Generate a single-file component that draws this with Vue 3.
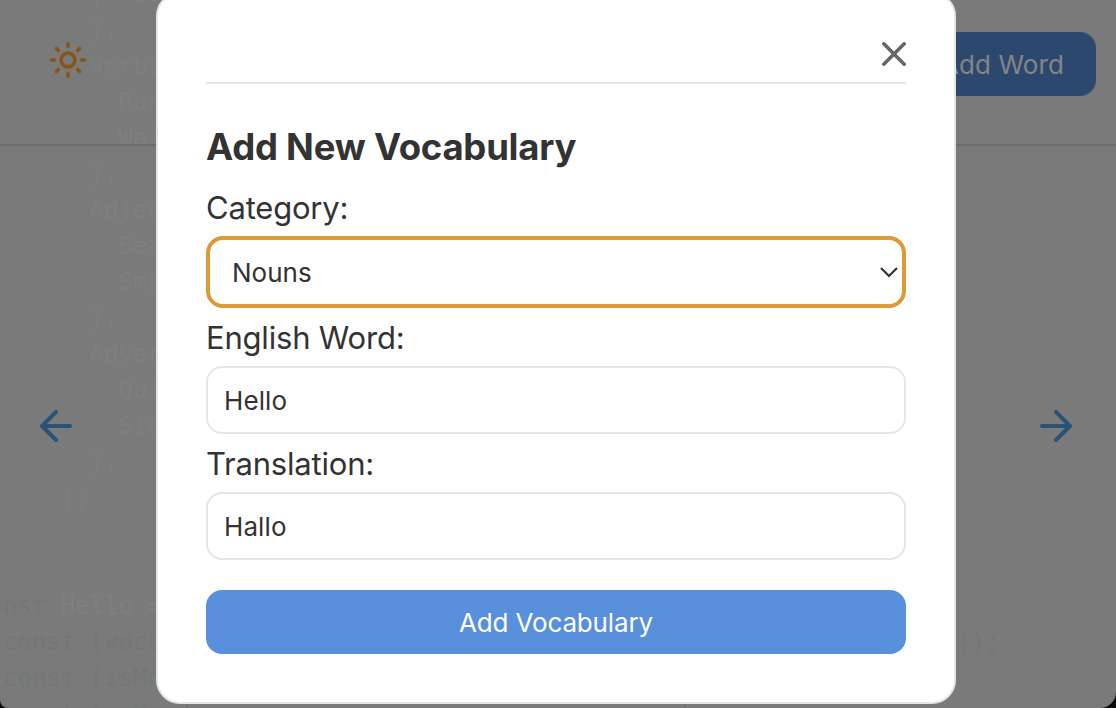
<script setup>
import { ref } from 'vue'

const category = ref('Nouns')
const word = ref('Hello')
const translation = ref('Hallo')

const codeLines = [
  { text: '        |  Goo', tone: 'dim' },
  { text: '        },', tone: 'dim' },
  { text: '        Verbs', tone: 'cool' },
  { text: '          Run', tone: 'cool' },
  { text: '          Wal', tone: 'cool' },
  { text: '        },', tone: 'dim' },
  { text: '        Adjec', tone: 'cool' },
  { text: '          Bea', tone: 'cool' },
  { text: '          Sma', tone: 'cool' },
  { text: '        },', tone: 'dim' },
  { text: '        Adver', tone: 'cool' },
  { text: '          Qui', tone: 'cool' },
  { text: '          Slo', tone: 'cool' },
  { text: '        },', tone: 'dim' },
  { text: '      };', tone: 'dim' },
  { text: '', tone: 'dim' },
  { text: '', tone: 'dim' },
  { keyword: 'const ', text: 'Hello =', tone: 'warm' },
  { text: '  const [voca', tail: '));', tone: 'blue' },
  { text: '  const [isMo', tone: 'blue' },
  { text: '  const [isM', tone: 'blue' },
]
</script>

<template>
  <div class="window">
    <div class="code" aria-hidden="true">
      <div v-for="(line, i) in codeLines" :key="i" :class="['line', line.tone]">
        <span v-if="line.keyword" class="blue">{{ line.keyword }}</span>
        <span>{{ line.text }}</span>
        <span v-if="line.tail" class="tail">{{ line.tail }}</span>
      </div>
    </div>

    <div class="page">
      <header class="topbar">
        <svg class="sun" width="40" height="40" viewBox="0 0 40 40">
          <circle cx="20" cy="20" r="6.9" />
          <path d="M20 3.6v2.9M20 33.5v2.9M3.6 20h2.9M33.5 20h2.9M8.4 8.4l2.1 2.1M29.5 29.5l2.1 2.1M8.4 31.6l2.1-2.1M29.5 10.5l2.1-2.1" />
        </svg>
        <button class="add-word">Add Word</button>
      </header>
      <main class="stage">
        <svg class="arrow" width="48" height="48" viewBox="0 0 24 24"><path d="M19 12H5M12 19l-7-7 7-7" /></svg>
        <svg class="arrow" width="48" height="48" viewBox="0 0 24 24"><path d="M5 12h14M12 5l7 7-7 7" /></svg>
      </main>
      <footer class="strip"><i></i><i></i></footer>
    </div>

    <div class="overlay">
      <form class="modal" @submit.prevent>
        <div class="modal-head">
          <svg width="24" height="24" viewBox="0 0 24 24"><path d="M1.8 1.8l20.4 20.4M22.2 1.8L1.8 22.2" /></svg>
        </div>
        <h3>Add New Vocabulary</h3>
        <label class="l-category">Category:</label>
        <div class="field select">
          <span>{{ category }}</span>
          <svg width="20" height="12" viewBox="0 0 20 12"><path d="M2 2l8 8 8-8" /></svg>
        </div>
        <label class="l-english">English Word:</label>
        <div class="field">{{ word }}</div>
        <label class="l-translation">Translation:</label>
        <div class="field">{{ translation }}</div>
        <button class="submit">Add Vocabulary</button>
      </form>
    </div>
  </div>
</template>

<style>
body { background: #0c0c0c; overflow: hidden; }
</style>

<style scoped>
* { box-sizing: border-box; }
.window {
  position: relative;
  width: 1116px;
  height: 708px;
  overflow: hidden;
  background: #7a7a7a;
  border-radius: 0 0 16px 8px;
  font-family: Inter, "Liberation Sans", sans-serif;
  color: #333;
}
.code {
  position: absolute;
  left: -26px;
  top: -24px;
  font: 24px/36px "DejaVu Sans Mono", monospace;
  white-space: pre;
}
.line { height: 36px; display: flex; }
.tail { margin-left: 55ch; }
.dim { color: #7e7e7f; }
.cool { color: #7b7f7f; }
.warm { color: #807f7d; }
.blue { color: #72777a; }

.page {
  position: relative;
  height: 708px;
  display: flex;
  flex-direction: column;
}
.topbar {
  height: 146px;
  border-bottom: 2px solid #6d6d6d;
  padding: 32px 20px 0 48px;
  display: flex;
  justify-content: space-between;
  align-items: flex-start;
}
svg { display: block; fill: none; stroke-linecap: round; stroke-linejoin: round; }
.sun { margin-top: 8px; stroke: #83561a; stroke-width: 3.6; }
button { border: 0; font: 430 26px/66px Inter, sans-serif; padding: 0; border-radius: 16px; }
.add-word {
  height: 64px;
  padding: 0 32px;
  background: #2c486e;
  color: #858585;
  letter-spacing: 0.1px;
}
.stage {
  flex: 1;
  display: flex;
  justify-content: space-between;
  align-items: center;
  padding: 2px 36px 0 32px;
}
.arrow { stroke: #285276; stroke-width: 2; }
.strip {
  height: 4px;
  padding-left: 186px;
  display: flex;
  gap: 496px;
}
.strip i { width: 2px; background: #707070; }

.overlay {
  position: absolute;
  inset: 0;
  padding-right: 4px;
  display: flex;
  justify-content: center;
  align-items: flex-start;
}
.modal {
  width: 800px;
  height: 712px;
  margin-top: -8px;
  padding: 48px;
  border: 2px solid #e5e5e5;
  border-radius: 24px;
  background: #fff;
}
.modal-head {
  height: 42px;
  border-bottom: 2px solid #e5e5e5;
  display: flex;
  justify-content: flex-end;
}
.modal-head svg { stroke: #666; stroke-width: 3.5; }
h3 {
  margin: 40px 0 0;
  font-size: 36.5px;
  line-height: 46px;
  font-weight: 700;
  letter-spacing: -0.24px;
}
label {
  display: block;
  font-size: 31px;
  line-height: 38px;
  letter-spacing: -0.2px;
  white-space: nowrap;
}
.l-category { margin: 19px 0 9px; }
.l-english { margin: 11px 0 9px; }
.l-translation { margin: 11px 0 9px; }
.field {
  height: 68px;
  border: 2px solid #e5e5e5;
  border-radius: 16px;
  padding: 0 16px;
  font-size: 26px;
  line-height: 65px;
  letter-spacing: 0.1px;
}
.select {
  height: 72px;
  border: 4px solid #dc9b37;
  border-radius: 17px;
  padding: 0 3px 0 22px;
  display: flex;
  align-items: center;
  justify-content: space-between;
  letter-spacing: 0;
}
.select svg { stroke: #333; stroke-width: 2.2; stroke-linejoin: miter; stroke-linecap: butt; }
.submit {
  display: block;
  width: 700px;
  height: 64px;
  margin-top: 30px;
  background: #5890dc;
  color: #fff;
  letter-spacing: -0.15px;
}
</style>
